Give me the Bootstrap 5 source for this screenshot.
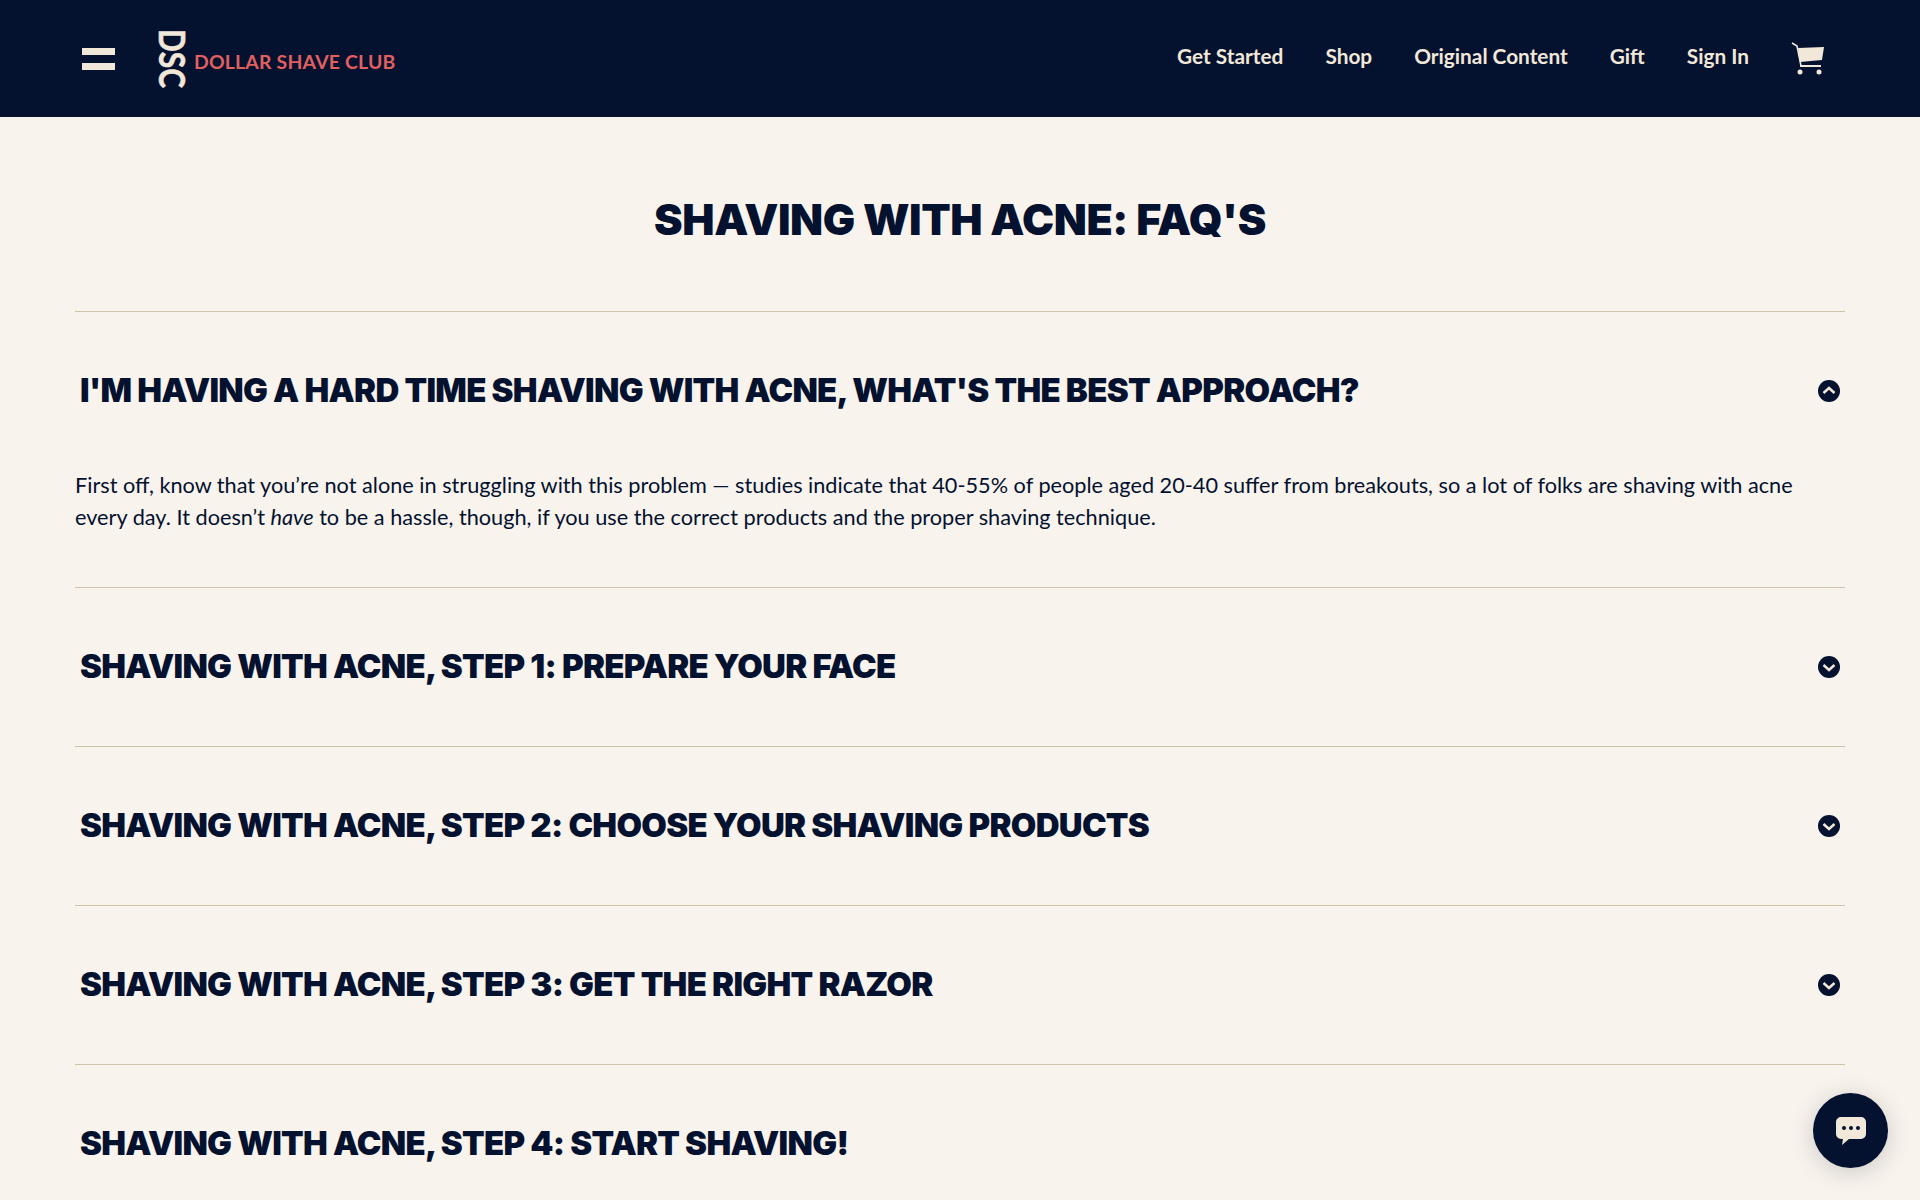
<!DOCTYPE html>
<html lang="en">
<head>
  <meta charset="UTF-8">
  <title>Shaving with Acne: FAQ's</title>
  <link href="https://cdn.jsdelivr.net/npm/bootstrap@5.3.3/dist/css/bootstrap.min.css" rel="stylesheet">
  <style>
    html, body { height: 1200px; overflow: hidden; }
    body { background-color: #f8f3ec; color: #04112f; font-family: "Lato", sans-serif; }
    .site-head { background-color: #04112f; height: 117px; padding: 0 95px 0 82px; }
    .burger { width: 33px; gap: 8px; }
    .burger span { display: block; height: 7px; background-color: #f2e8d9; }
    .dsc-mark { writing-mode: vertical-rl; color: #f2e8d9; font-family: "Lato", sans-serif; font-weight: 700; font-size: 30px; line-height: 26px; -webkit-text-stroke: 0.5px #f2e8d9; transform: scaleX(1.2); margin-left: 45px; width: 26px; height: 60px; }
    .dsc-name { color: #e0605f; font-family: "Lato", sans-serif; font-weight: 700; font-size: 19.4px; letter-spacing: 0.2px; margin-left: 8px; margin-top: 6px; }
    .top-links { gap: 42px; }
    .top-links a { color: #f2e8d9; font-weight: 700; font-size: 20.8px; text-decoration: none; position: relative; top: -3px; }
    .faq-wrap { padding: 0 75px; }
    .faq-title { font-family: "Inter", sans-serif; font-weight: 900; font-size: 43px; text-align: center; text-transform: uppercase; margin: 0; padding-top: 76px; height: 194px; line-height: 52px; letter-spacing: -0.4px; }
    .faq-row { border-top: 1px solid #cfc3a8; }
    .faq-head { height: 158px; padding: 0 5px; }
    .faq-head h2 { font-family: "Inter", sans-serif; font-weight: 900; font-size: 33px; line-height: 40px; margin: 0; text-transform: uppercase; letter-spacing: -0.7px; position: relative; top: -1px; }
    .faq-body { font-size: 21.7px; line-height: 32px; height: 117px; margin: 0; position: relative; top: -1px; }
    .chat-bubble { position: absolute; right: 32px; bottom: 32px; width: 75px; height: 75px; border-radius: 50%; background-color: #04112f; box-shadow: 0 4px 24px rgba(4, 17, 47, .18); }
  </style>
</head>
<body class="position-relative">
  <header class="site-head d-flex align-items-center justify-content-between">
    <div class="d-flex align-items-center">
      <div class="burger d-flex flex-column"><span></span><span></span></div>
      <div class="dsc-mark">DSC</div>
      <div class="dsc-name">DOLLAR SHAVE CLUB</div>
    </div>
    <nav class="top-links d-flex align-items-center">
      <a href="#">Get Started</a>
      <a href="#">Shop</a>
      <a href="#">Original Content</a>
      <a href="#">Gift</a>
      <a href="#">Sign In</a>
      <svg width="34" height="34" viewBox="0 0 34 34">
        <path d="M1 1l5 3 4 20h19" fill="none" stroke="#f2e8d9" stroke-width="1.6"/>
        <path d="M7 6l26-1-2 13-22 2z" fill="#f2e8d9"/>
        <rect x="9" y="23" width="21" height="2" fill="#f2e8d9"/>
        <circle cx="9" cy="30" r="2.500" fill="#f2e8d9"/>
        <circle cx="28" cy="30" r="2.500" fill="#f2e8d9"/>
      </svg>
    </nav>
  </header>

  <main class="faq-wrap">
    <h1 class="faq-title">Shaving with acne: FAQ's</h1>

    <section class="faq-row">
      <div class="faq-head d-flex align-items-center justify-content-between">
        <h2>I'm having a hard time shaving with acne, what's the best approach?</h2>
        <svg width="22" height="22" viewBox="0 0 22 22"><circle cx="11" cy="11" r="11" fill="#04112f"/><path d="M5.500 13l5.500-5 5.500 5" fill="none" stroke="#f2e8d9" stroke-width="2.500"/></svg>
      </div>
      <p class="faq-body">First off, know that you’re not alone in struggling with this problem — studies indicate that 40-55% of people aged 20-40 suffer from breakouts, so a lot of folks are shaving with acne every day. It doesn’t <em>have</em> to be a hassle, though, if you use the correct products and the proper shaving technique.</p>
    </section>

    <section class="faq-row">
      <div class="faq-head d-flex align-items-center justify-content-between">
        <h2>Shaving with acne, step 1: Prepare your face</h2>
        <svg width="22" height="22" viewBox="0 0 22 22"><circle cx="11" cy="11" r="11" fill="#04112f"/><path d="M5.500 9l5.500 5 5.500-5" fill="none" stroke="#f2e8d9" stroke-width="2.500"/></svg>
      </div>
    </section>

    <section class="faq-row">
      <div class="faq-head d-flex align-items-center justify-content-between">
        <h2>Shaving with acne, step 2: Choose your shaving products</h2>
        <svg width="22" height="22" viewBox="0 0 22 22"><circle cx="11" cy="11" r="11" fill="#04112f"/><path d="M5.500 9l5.500 5 5.500-5" fill="none" stroke="#f2e8d9" stroke-width="2.500"/></svg>
      </div>
    </section>

    <section class="faq-row">
      <div class="faq-head d-flex align-items-center justify-content-between">
        <h2>Shaving with acne, step 3: Get the right razor</h2>
        <svg width="22" height="22" viewBox="0 0 22 22"><circle cx="11" cy="11" r="11" fill="#04112f"/><path d="M5.500 9l5.500 5 5.500-5" fill="none" stroke="#f2e8d9" stroke-width="2.500"/></svg>
      </div>
    </section>

    <section class="faq-row">
      <div class="faq-head d-flex align-items-center justify-content-between">
        <h2>Shaving with acne, step 4: Start shaving!</h2>
      </div>
    </section>
  </main>

  <div class="chat-bubble d-flex align-items-center justify-content-center">
    <svg width="32" height="32" viewBox="0 0 32 32">
      <path d="M6 2h20a5 5 0 0 1 5 5v12a5 5 0 0 1-5 5H14l-7 6 1-6H6a5 5 0 0 1-5-5V7a5 5 0 0 1 5-5z" fill="#f2e8d9"/>
      <circle cx="9" cy="13" r="2" fill="#04112f"/><circle cx="16" cy="13" r="2" fill="#04112f"/><circle cx="23" cy="13" r="2" fill="#04112f"/>
    </svg>
  </div>

  <script src="https://cdn.jsdelivr.net/npm/bootstrap@5.3.3/dist/js/bootstrap.bundle.min.js"></script>
</body>
</html>
